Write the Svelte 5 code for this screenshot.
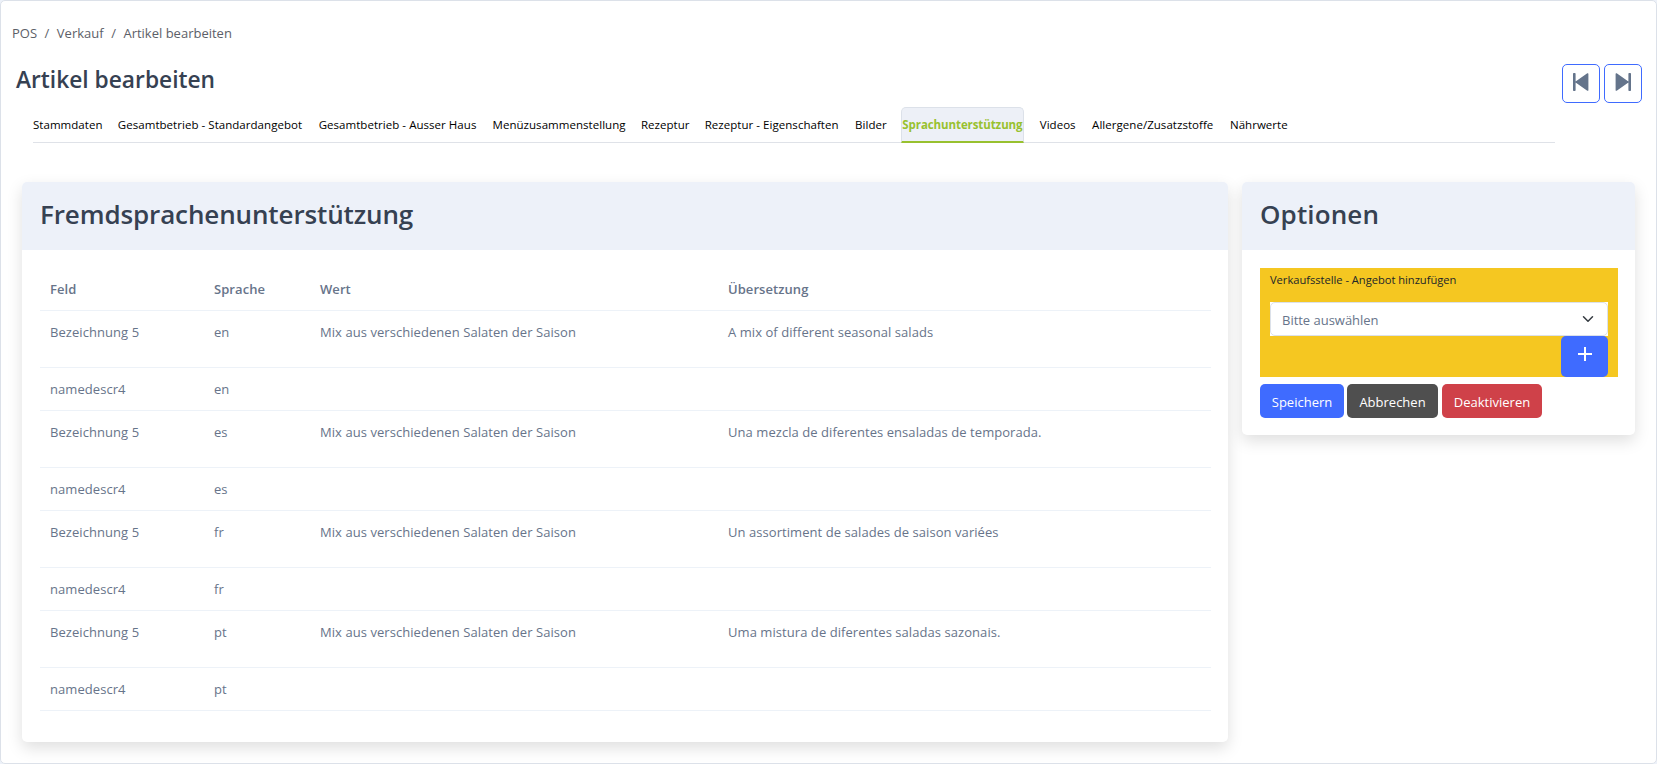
<script>
  const crumbs = ['POS', 'Verkauf', 'Artikel bearbeiten'];

  const tabs = [
    { label: 'Stammdaten', width: 69 },
    { label: 'Gesamtbetrieb - Standardangebot', width: 185 },
    { label: 'Gesamtbetrieb - Ausser Haus', width: 158 },
    { label: 'Menüzusammenstellung', width: 132.5 },
    { label: 'Rezeptur', width: 48 },
    { label: 'Rezeptur - Eigenschaften', width: 134.5 },
    { label: 'Bilder', width: 30 },
    { label: 'Sprachunterstützung', width: 123, active: true },
    { label: 'Videos', width: 36.5 },
    { label: 'Allergene/Zusatzstoffe', width: 122 },
    { label: 'Nährwerte', width: 57 }
  ];

  const source = 'Mix aus verschiedenen Salaten der Saison';
  const translations = [
    { lang: 'en', text: 'A mix of different seasonal salads' },
    { lang: 'es', text: 'Una mezcla de diferentes ensaladas de temporada.' },
    { lang: 'fr', text: 'Un assortiment de salades de saison variées' },
    { lang: 'pt', text: 'Uma mistura de diferentes saladas sazonais.' }
  ];
</script>

{#snippet skipIcon(flip)}
  <svg class:flip width="16" height="18" viewBox="0 0 16 18">
    <path d="M0 .8Q0 0 .8 0h1Q2.600 0 2.600.8v7.700L14.300.3Q15.400-.2 15.400 1v16q0 1.200-1.100.7L2.600 9.500v7.700q0 .8-.8.8h-1Q0 18 0 17.200z" />
  </svg>
{/snippet}

<div class="page">
  <nav class="crumbs">
    {#each crumbs as crumb, i}
      {#if i > 0}<span class="sep">/</span>{/if}
      <span>{crumb}</span>
    {/each}
  </nav>

  <header class="top">
    <h1>Artikel bearbeiten</h1>
    <div class="pager">
      <button aria-label="Vorheriger Artikel">{@render skipIcon(false)}</button>
      <button aria-label="Nächster Artikel">{@render skipIcon(true)}</button>
    </div>
  </header>

  <div class="tabs">
    {#each tabs as tab}
      <span class="tab" class:active={tab.active} style:width="{tab.width}px">{tab.label}</span>
    {/each}
  </div>

  <main>
    <section class="card">
      <h2>Fremdsprachenunterstützung</h2>
      <div class="body">
        <table>
          <colgroup>
            <col class="c1" /><col class="c2" /><col class="c3" /><col />
          </colgroup>
          <thead>
            <tr><th>Feld</th><th>Sprache</th><th>Wert</th><th>Übersetzung</th></tr>
          </thead>
          <tbody>
            {#each translations as t}
              <tr class="tall"><td>Bezeichnung 5</td><td>{t.lang}</td><td>{source}</td><td>{t.text}</td></tr>
              <tr><td>namedescr4</td><td>{t.lang}</td><td></td><td></td></tr>
            {/each}
          </tbody>
        </table>
      </div>
    </section>

    <section class="card options">
      <h2>Optionen</h2>
      <div class="body">
        <div class="offer">
          <span class="label">Verkaufsstelle - Angebot hinzufügen</span>
          <div class="select-wrap">
            <div class="select">
              <span>Bitte auswählen</span>
              <svg width="12" height="12" viewBox="0 0 16 16"><path d="m2 5 6 6 6-6" fill="none" stroke="#343a40" stroke-width="2" stroke-linecap="round" stroke-linejoin="round" /></svg>
            </div>
          </div>
          <button class="add" aria-label="Hinzufügen">
            <svg width="15" height="15" viewBox="0 0 15 15"><path d="M7 0h2v6h6v2H9v6H7V8H1V6h6z" fill="#fff" /></svg>
          </button>
        </div>
        <div class="actions">
          <button class="save">Speichern</button>
          <button class="cancel">Abbrechen</button>
          <button class="disable">Deaktivieren</button>
        </div>
      </div>
    </section>
  </main>
</div>

<style>
  :global(body) { background: #edf1f9; }
  * { box-sizing: border-box; }
  .page {
    height: 764px;
    overflow: hidden;
    background: #fff;
    border: 1px solid #dce1e9;
    border-radius: 5px;
    font: 13px/21px "Open Sans", "Noto Sans", sans-serif;
    letter-spacing: 0.06px;
    color: #67748a;
  }
  button { font: inherit; letter-spacing: 0; border: 0; padding: 0; margin: 0; }
  .crumbs {
    display: flex;
    padding: 22px 0 0 11px;
    height: 53px;
    letter-spacing: 0;
    color: #5c6068;
  }
  .sep { width: 19.800px; text-align: center; }
  .top {
    display: flex;
    justify-content: space-between;
    padding: 10px 14px 0 15px;
    height: 53px;
  }
  h1 {
    margin: 0;
    font-size: 22.750px;
    line-height: 32px;
    font-weight: 600;
    letter-spacing: 0;
    color: #364152;
  }
  .pager { display: flex; gap: 4px; }
  .pager button {
    width: 38px;
    height: 39px;
    display: flex;
    justify-content: center;
    padding-top: 8px;
    border: 1px solid #3f6bff;
    border-radius: 5px;
    background: #fff;
  }
  .pager svg { fill: #64748b; }
  .flip { transform: scaleX(-1); }
  .tabs {
    display: flex;
    gap: 15.850px;
    height: 36px;
    width: 1522px;
    margin-left: 32px;
    border-bottom: 1px solid #dfe2e8;
    color: #000;
    font-size: 11.500px;
    line-height: 36px;
    letter-spacing: 0.040px;
    white-space: nowrap;
  }
  .tab { flex: none; }
  .tab.active {
    height: 36px;
    line-height: 34px;
    text-align: center;
    font-weight: 700;
    letter-spacing: -0.090px;
    color: #98c12f;
    background: #edf0f7;
    border: 1px solid #dce1e9;
    border-bottom: 2px solid #98c12f;
    border-radius: 5px 5px 0 0;
  }
  main {
    display: grid;
    grid-template-columns: 1206px 393px;
    gap: 14px;
    align-items: start;
    padding: 39px 0 0 21px;
  }
  .card {
    height: 560px;
    border-radius: 5px;
    background: #fff;
    box-shadow: 0 6px 16px rgba(0, 0, 0, 0.13);
  }
  .options { height: 253px; }
  h2 {
    margin: 0;
    height: 68px;
    padding: 12px 18px 0;
    border-radius: 5px 5px 0 0;
    background: #edf1f9;
    color: #364152;
    font-size: 26px;
    line-height: 40px;
    font-weight: 600;
    letter-spacing: -0.120px;
  }
  .options h2 { letter-spacing: 0.120px; }
  .body { padding: 18px 17px 0 18px; }
  table {
    width: 1171px;
    border-collapse: separate;
    border-spacing: 0;
    table-layout: fixed;
  }
  .c1 { width: 164px; }
  .c2 { width: 106px; }
  .c3 { width: 408px; }
  th, td {
    height: 43px;
    padding: 11px 10px 0;
    text-align: left;
    vertical-align: top;
    border-bottom: 1px solid #edf2f8;
  }
  th { font-weight: 600; }
  .tall td { height: 57px; }
  .offer {
    height: 109px;
    padding: 0 10px;
    display: flex;
    flex-direction: column;
    background: #f5c721;
  }
  .label {
    height: 34px;
    font-size: 11.150px;
    line-height: 24px;
    letter-spacing: -0.020px;
    color: #212529;
  }
  .select-wrap { background: #fff; height: 34px; }
  .select {
    height: 34px;
    display: flex;
    align-items: center;
    justify-content: space-between;
    padding: 2px 13px 0 11px;
    border: 1px solid #dce1e9;
    border-radius: 5px;
    letter-spacing: -0.020px;
  }
  .select svg { margin-top: -3px; }
  .add {
    align-self: flex-end;
    width: 47px;
    height: 41px;
    display: flex;
    justify-content: center;
    padding-top: 11px;
    border-radius: 5px;
    background: #3f6bff;
  }
  .actions { display: flex; padding-top: 7px; }
  .actions button {
    height: 34px;
    padding-top: 2px;
    border-radius: 5px;
    color: #fff;
  }
  .actions .save { width: 84px; margin-right: 3px; background: #3f6bff; }
  .actions .cancel { width: 91px; margin-right: 4px; background: #4f4f4f; }
  .actions .disable { width: 100px; background: #cf4149; }
</style>
